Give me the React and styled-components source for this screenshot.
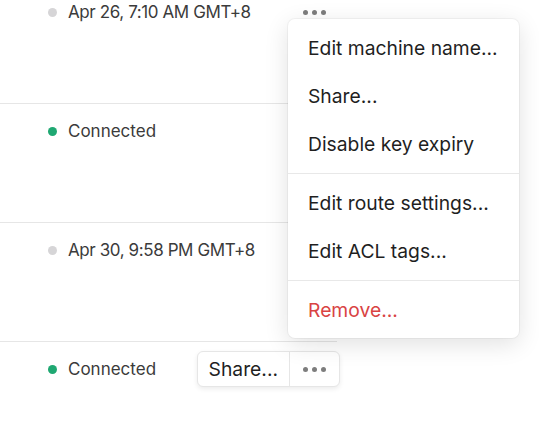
import React from "react";
import styled, { createGlobalStyle } from "styled-components";

const Global = createGlobalStyle`
  html, body { margin: 0; padding: 0; background: #fff; }
  body { font-family: Inter, "Noto Sans", sans-serif; overflow: hidden; }
`;

const Page = styled.div`
  position: relative;
  width: 539px;
  height: 421px;
  overflow: hidden;
`;

const List = styled.div`
  width: 337px;
  margin-top: -15px;
  display: flex;
  flex-direction: column;
`;

const Row = styled.div`
  height: 119px;
  border-bottom: 1px solid #e6e6e6;
  display: flex;
  align-items: flex-start;
  justify-content: space-between;
  padding: 15px 0 0 48px;
  box-sizing: border-box;
  &:last-child { border-bottom: none; }
`;

const Status = styled.div`
  display: flex;
  align-items: center;
  gap: 11px;
  height: 24px;
  font-size: 17px;
  letter-spacing: ${(p) => (p.$compact ? "-0.4px" : "0")};
  color: #3b3b3b;
`;

const Dot = styled.span`
  width: 9px;
  height: 9px;
  border-radius: 50%;
  background: ${(p) => (p.$on ? "#1fa872" : "#d6d5d7")};
`;

const Actions = styled.div`
  display: flex;
  height: 36px;
  margin-top: -6px;
  margin-right: -3px;
  border-radius: 6px;
  border: 1px solid ${(p) => (p.$hover ? "#e6e6e6" : "transparent")};
  box-shadow: ${(p) => (p.$hover ? "0 2px 5px rgba(0,0,0,0.08)" : "none")};
  background: ${(p) => (p.$hover ? "#fff" : "transparent")};
  box-sizing: border-box;
`;

const ShareBtn = styled.button`
  all: unset;
  display: flex;
  align-items: center;
  padding: 0 11px;
  font-family: Inter, sans-serif;
  font-size: 19.3px;
  color: #1f1f1f;
  border-right: 1px solid #e6e6e6;
`;

const MoreBtn = styled.button`
  all: unset;
  width: 49px;
  display: flex;
  align-items: center;
  justify-content: center;
  gap: 4px;
`;

const MoreDot = styled.span`
  width: 5px;
  height: 5px;
  border-radius: 50%;
  background: #7d7d7d;
`;

const Menu = styled.div`
  position: absolute;
  left: 288px;
  top: 19px;
  width: 231px;
  background: #fff;
  border-radius: 7px;
  box-shadow: 0 0 0 1px rgba(0,0,0,0.04), 0 6px 24px rgba(0,0,0,0.12);
  padding: 5px 0 4px;
  box-sizing: border-box;
`;

const Item = styled.div`
  height: 48px;
  display: flex;
  align-items: center;
  padding-left: 20px;
  font-size: 19.3px;
  color: ${(p) => (p.$danger ? "#d94343" : "#1f1f1f")};
`;

const Sep = styled.div`
  height: 1px;
  background: #e8e8e8;
  margin: 5px 0;
`;

const More = () => (
  <MoreBtn>
    <MoreDot />
    <MoreDot />
    <MoreDot />
  </MoreBtn>
);

const rows = [
  { on: false, text: "Apr 26, 7:10 AM GMT+8", compact: true },
  { on: true, text: "Connected", noActions: true },
  { on: false, text: "Apr 30, 9:58 PM GMT+8", compact: true, noActions: true },
  { on: true, text: "Connected", hover: true },
];

export default function App() {
  return (
    <Page>
      <Global />
      <List>
        {rows.map((r, i) => (
          <Row key={i}>
            <Status $compact={r.compact}>
              <Dot $on={r.on} />
              {r.text}
            </Status>
            {!r.noActions && (
              <Actions $hover={r.hover}>
                {r.hover && <ShareBtn>Share...</ShareBtn>}
                <More />
              </Actions>
            )}
          </Row>
        ))}
      </List>
      <Menu>
        <Item>Edit machine name...</Item>
        <Item>Share...</Item>
        <Item>Disable key expiry</Item>
        <Sep />
        <Item>Edit route settings...</Item>
        <Item>Edit ACL tags...</Item>
        <Sep />
        <Item $danger>Remove...</Item>
      </Menu>
    </Page>
  );
}
